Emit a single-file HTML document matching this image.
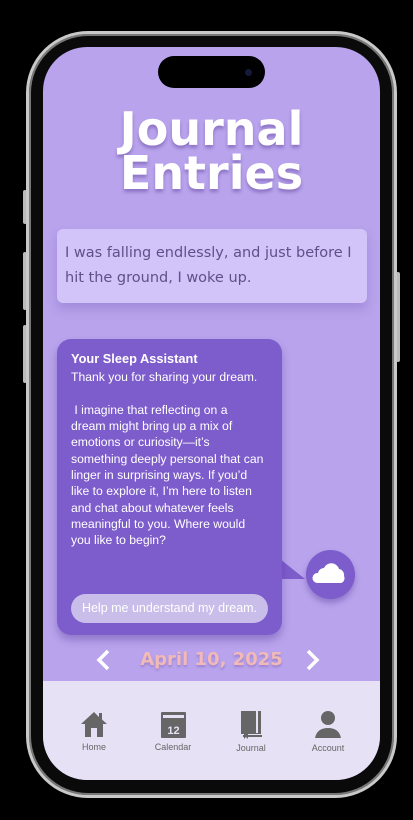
<!DOCTYPE html>
<html><head><style>
*{margin:0;padding:0;box-sizing:border-box}
body{width:413px;height:820px;background:#000;position:relative;overflow:hidden;font-family:"Liberation Sans",sans-serif}
.frame{position:absolute;left:26px;top:31px;width:371px;height:767px;border-radius:62px;border:3px solid #c9c9c9;background:#0a0a0a;box-shadow:inset 0 0 0 2px #777}
.btn{position:absolute;background:#bbb;width:4px;border-radius:2px}
.screen{position:absolute;left:43px;top:47px;width:337px;height:733px;border-radius:44px;background:#b8a3ec;overflow:hidden}
.island{position:absolute;left:115px;top:9px;width:107px;height:32px;border-radius:16px;background:#000}
.cam{position:absolute;left:202px;top:22px;width:7px;height:7px;border-radius:50%;background:#141a3a}
h1{position:absolute;left:0;width:337px;top:60px;text-align:center;color:#fff;font-family:"DejaVu Sans",sans-serif;font-weight:bold;font-size:46px;line-height:44px;text-shadow:0 3px 3px rgba(90,60,150,.45);letter-spacing:0}
.entry{position:absolute;left:14px;top:182px;width:310px;height:74px;background:#d2c4f9;border-radius:6px;box-shadow:0 6px 10px rgba(100,70,170,.25);padding:12px 8px;color:#5f5088;font-family:"DejaVu Sans",sans-serif;font-size:14.5px;line-height:25px}
.bubble{position:absolute;left:14px;top:292px;width:225px;height:296px;background:#7d5ccb;border-radius:14px;box-shadow:0 5px 8px rgba(70,40,140,.35);color:#fff;padding:12px 18px 12px 14px;font-size:12.2px;line-height:16.3px}
.bubble b{font-size:12.8px;display:block;margin-bottom:2px}
.tail{position:absolute;left:232px;top:508px;width:0;height:0;border-left:30px solid #7d5ccb;border-top:24px solid transparent}
.chip{position:absolute;left:14px;top:255px;width:197px;height:29px;border-radius:15px;background:#c9bdea;color:#fff;font-size:12.5px;line-height:29px;text-align:center}
.cloud{position:absolute;left:263px;top:503px;width:49px;height:49px;border-radius:50%;background:#7d5ccb;box-shadow:0 4px 6px rgba(70,40,140,.35)}
.date{position:absolute;left:0;width:337px;top:602px;text-align:center;color:#f1b9b7;font-family:"DejaVu Sans",sans-serif;font-weight:bold;font-size:18px;letter-spacing:0;text-shadow:0 2px 2px rgba(120,80,160,.4)}
.nav{position:absolute;left:0;top:634px;width:337px;height:99px;background:#e6e1f5}
.item{position:absolute;top:28px;width:70px;text-align:center;color:#666;font-size:9px}
.item svg{display:block;margin:0 auto 3px}
</style></head><body>
<div class="btn" style="left:23px;top:190px;height:34px"></div>
<div class="btn" style="left:23px;top:252px;height:58px"></div>
<div class="btn" style="left:23px;top:325px;height:58px"></div>
<div class="btn" style="left:396px;top:272px;height:90px"></div>
<div class="frame"></div>
<div class="screen">
<div class="island"></div><div class="cam"></div>
<h1>Journal<br>Entries</h1>
<div class="entry">I was falling endlessly, and just before I hit the ground, I woke up.</div>
<div class="tail"></div>
<div class="bubble"><b>Your Sleep Assistant</b>Thank you for sharing your dream.<br><br>&nbsp;I imagine that reflecting on a dream might bring up a mix of emotions or curiosity—it’s something deeply personal that can linger in surprising ways. If you’d like to explore it, I’m here to listen and chat about whatever feels meaningful to you. Where would you like to begin?
<div class="chip">Help me understand my dream.</div></div>
<div class="cloud"><svg width="49" height="49" viewBox="0 0 49 49"><path d="M11 33 a5 5 0 0 1 1-10 a6 6 0 0 1 6-5 a8 8 0 0 1 15 1 a6 6 0 0 1 5 7 a5 5 0 0 1-3 7z" fill="#fff"/></svg></div>
<svg style="position:absolute;left:52px;top:602px" width="16" height="22" viewBox="0 0 16 22"><path d="M13 2 L4 11 L13 20" stroke="#fff" stroke-width="3.5" fill="none"/></svg>
<svg style="position:absolute;left:262px;top:602px" width="16" height="22" viewBox="0 0 16 22"><path d="M3 2 L12 11 L3 20" stroke="#fff" stroke-width="3.5" fill="none"/></svg>
<div class="date">April 10, 2025</div>
<div class="nav">
<div class="item" style="left:16px"><svg width="30" height="30" viewBox="0 0 30 30"><path d="M15 3 L2 15 H6 V28 H12 V20 H18 V28 H24 V15 H28 L23 10.5 V4 H20 V8 Z" fill="#666"/><rect x="12" y="19" width="6" height="9" fill="#e6e1f5"/></svg>Home</div>
<div class="item" style="left:95px"><svg width="30" height="30" viewBox="0 0 30 30"><rect x="3" y="3" width="25" height="26" rx="1" fill="#666"/><rect x="5" y="6" width="21" height="3" fill="#e6e1f5"/><text x="15.5" y="25" font-size="11" font-weight="bold" fill="#e6e1f5" text-anchor="middle" font-family="Liberation Sans">12</text></svg>Calendar</div>
<div class="item" style="left:173px;top:27px"><svg width="30" height="32" viewBox="0 0 30 32"><path d="M5 3 H25 V26 H5 Z" fill="#666"/><rect x="7" y="27" width="19" height="2" fill="#666"/><path d="M8 26 V31 L10 29 L12 31 V26" fill="#666"/><rect x="20" y="3" width="2" height="22" fill="#e6e1f5"/></svg>Journal</div>
<div class="item" style="left:250px"><svg width="30" height="31" viewBox="0 0 30 31"><circle cx="15" cy="9" r="7" fill="#666"/><path d="M2 29 Q4 19 15 19 Q26 19 28 29 Z" fill="#666"/></svg>Account</div>
</div>
</div>
</body></html>
